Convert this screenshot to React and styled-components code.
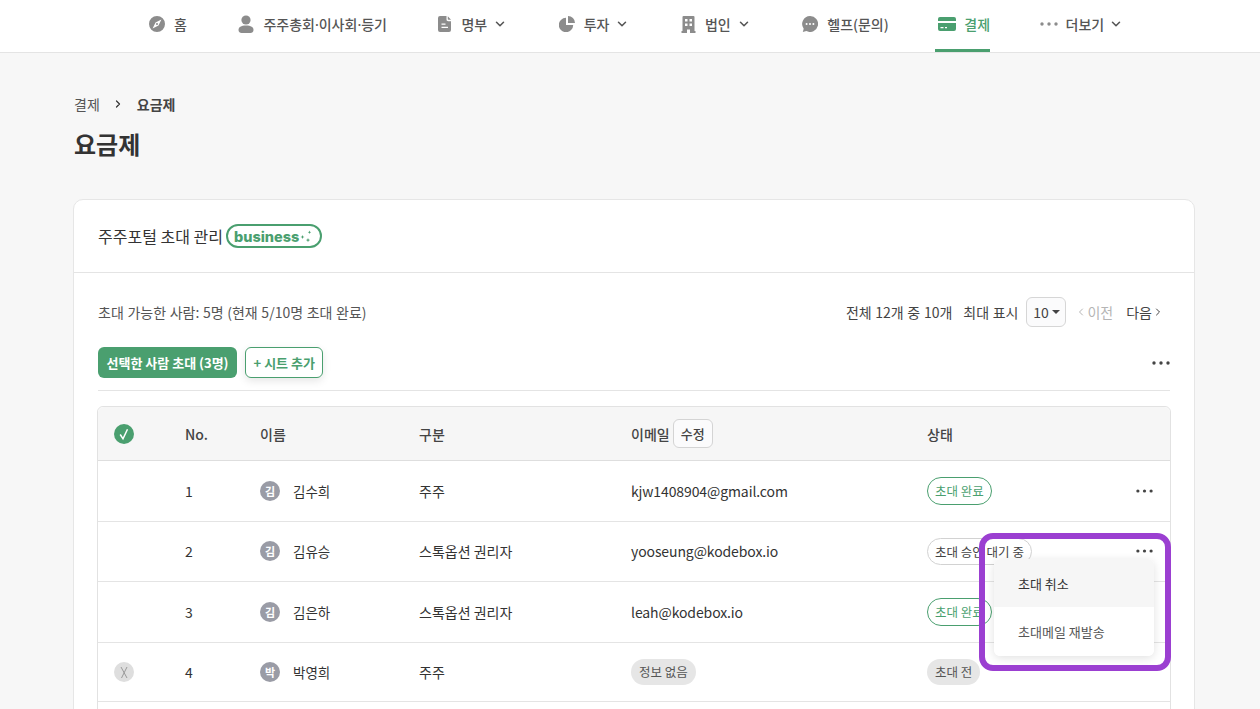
import React from "react";
import styled, { createGlobalStyle } from "styled-components";
import { ChevronDown, ChevronLeft, ChevronRight } from "lucide-react";

const GREEN = "#4a9f6f";

const GlobalStyle = createGlobalStyle`
  html, body {
    margin: 0;
    padding: 0;
    height: 100%;
    overflow: hidden;
    background: #f7f7f7;
  }
  * { box-sizing: border-box; }
  body {
    font-family: "Noto Sans CJK KR", "Noto Sans", sans-serif;
    color: #333;
  }
`;

// the CJK middle dot is too wide here
const MidDot = styled.span`
  font-family: "Noto Sans", sans-serif;
`;

// nav icons
const CompassIcon = () => (
  <svg width="16" height="16" viewBox="0 0 16 16">
    <path
      fillRule="evenodd"
      fill="currentColor"
      d="M8 0a8 8 0 1 1 0 16A8 8 0 0 1 8 0zm4.400 3.600L6.500 6.500 3.600 12.400l5.900-2.900 2.900-5.900zM8 7a1 1 0 1 1 0 2 1 1 0 0 1 0-2z"
    />
  </svg>
);
const PersonIcon = () => (
  <svg width="16" height="18" viewBox="0 0 16 18">
    <circle cx="8" cy="5" r="4.600" fill="currentColor" />
    <path fill="currentColor" d="M0.500 15c0-3 2.500-4.500 7.500-4.500s7.500 1.500 7.500 4.500c0 2-1.500 3-3 3h-9c-1.500 0-3-1-3-3z" />
  </svg>
);
const FileIcon = () => (
  <svg width="14" height="16" viewBox="0 0 14 16">
    <path
      fillRule="evenodd"
      fill="currentColor"
      d="M2 0h6.500v3.500c0 1 .7 1.700 1.700 1.700H13V14a2 2 0 0 1-2 2H2a2 2 0 0 1-2-2V2a2 2 0 0 1 2-2zm1.500 7.500v1.300h4V7.500h-4zm0 3.200V12h6.500v-1.300H3.500z"
    />
    <path fill="currentColor" d="M9.800 0.300L13 3.800h-2.500a.7.7 0 0 1-.7-.7V.3z" />
  </svg>
);
const PieIcon = () => (
  <svg width="16" height="16" viewBox="0 0 16 16">
    <path fill="currentColor" d="M7 1.800V9h7.200A7.200 7.200 0 1 1 7 1.800z" />
    <path fill="currentColor" d="M9 0a7 7 0 0 1 7 7H9V0z" />
  </svg>
);
const BuildingIcon = () => (
  <svg width="15" height="17" viewBox="0 0 14 17">
    <path
      fillRule="evenodd"
      fill="currentColor"
      d="M2 0h10a1 1 0 0 1 1 1v14h1v2H8.500v-3.500h-3V17H0v-2h1V1a1 1 0 0 1 1-1zm1.500 3v2.500h2.500V3H3.500zm4.500 0v2.500h2.500V3H8zM3.500 7.500V10h2.500V7.500H3.500zm4.500 0V10h2.500V7.500H8z"
    />
  </svg>
);
const ChatIcon = () => (
  <svg width="16" height="16" viewBox="0 0 16 16">
    <path
      fillRule="evenodd"
      fill="currentColor"
      d="M8 0a8 8 0 1 1-3.600 15.100L.8 16l.9-3.300A8 8 0 0 1 8 0zM4.600 7a1 1 0 1 0 0 2 1 1 0 0 0 0-2zM8 7a1 1 0 1 0 0 2 1 1 0 0 0 0-2zm3.400 0a1 1 0 1 0 0 2 1 1 0 0 0 0-2z"
    />
  </svg>
);
const CardIcon = () => (
  <svg width="18" height="14" viewBox="0 0 18 14">
    <path
      fillRule="evenodd"
      fill="currentColor"
      d="M2 0h14a2 2 0 0 1 2 2v2H0V2a2 2 0 0 1 2-2zM0 6h18v6a2 2 0 0 1-2 2H2a2 2 0 0 1-2-2V6zm2.500 4v1.300h3V10h-3zm4.500 0v1.300h2V10H7z"
    />
  </svg>
);
const DotsIcon = ({ width = 18 }) => (
  <svg width={width} height="4" viewBox="0 0 18 4">
    <circle cx="2" cy="2" r="1.700" fill="currentColor" />
    <circle cx="9" cy="2" r="1.700" fill="currentColor" />
    <circle cx="16" cy="2" r="1.700" fill="currentColor" />
  </svg>
);
const Sparkles = () => (
  <svg width="13" height="13" viewBox="0 0 13 13">
    <path fill={GREEN} d="M2.500 5l.6 1.400L4.500 7l-1.400.6L2.500 9l-.6-1.400L.5 7l1.400-.6z" />
    <path fill={GREEN} d="M9.500 0.500l.5 1.200 1.200.5-1.200.5-.5 1.200-.5-1.200-1.200-.5 1.200-.5z" />
    <path fill={GREEN} d="M8 8l.6 1.500 1.500.6-1.500.6L8 12.300l-.6-1.600-1.500-.6 1.500-.6z" />
  </svg>
);
const ThinCheck = () => (
  <svg width="20" height="20" viewBox="0 0 20 20">
    <path d="M6.200 10.500L9 14.800 13.500 5.200" fill="none" stroke="#fff" strokeWidth="1.500" />
  </svg>
);
const ThinCross = () => (
  <svg width="20" height="20" viewBox="0 0 20 20">
    <path d="M7 5l6 11M13 5L7.500 16" fill="none" stroke="#999" strokeWidth="1" />
  </svg>
);

const NAV_ITEMS = [
  { id: "home", label: "홈", icon: <CompassIcon /> },
  {
    id: "meeting",
    label: (
      <>
        주주총회<MidDot>·</MidDot>이사회<MidDot>·</MidDot>등기
      </>
    ),
    icon: <PersonIcon />,
  },
  { id: "list", label: "명부", icon: <FileIcon />, more: true },
  { id: "invest", label: "투자", icon: <PieIcon />, more: true },
  { id: "corp", label: "법인", icon: <BuildingIcon />, more: true },
  { id: "help", label: "헬프(문의)", icon: <ChatIcon /> },
  { id: "pay", label: "결제", icon: <CardIcon />, active: true, tight: true },
  { id: "etc", label: "더보기", icon: <DotsIcon />, more: true, tight: true },
];

const ROWS = [
  { no: 1, name: "김수희", initial: "김", type: "주주", email: "kjw1408904@gmail.com", status: "초대 완료", tone: "green" },
  { no: 2, name: "김유승", initial: "김", type: "스톡옵션 권리자", email: "yooseung@kodebox.io", status: "초대 승인 대기 중", tone: "line", open: true },
  { no: 3, name: "김은하", initial: "김", type: "스톡옵션 권리자", email: "leah@kodebox.io", status: "초대 완료", tone: "green" },
  { no: 4, name: "박영희", initial: "박", type: "주주", status: "초대 전", tone: "gray", blocked: true },
];

export default function App() {
  return (
    <Page>
      <GlobalStyle />
      <Header>
        <Nav>
          {NAV_ITEMS.map((item) => (
            <NavItem key={item.id} $active={item.active} $tight={item.tight}>
              <NavIcon $active={item.active}>{item.icon}</NavIcon>
              <span>{item.label}</span>
              {item.more && <NavChevron size={14} strokeWidth={2.6} />}
            </NavItem>
          ))}
        </Nav>
      </Header>

      <Main>
        <Breadcrumb>
          <span>결제</span>
          <ChevronRight size={12} strokeWidth={2.4} />
          <strong>요금제</strong>
        </Breadcrumb>
        <Title>요금제</Title>

        <Card>
          <CardHead>
            주주포털 초대 관리
            <PlanBadge>
              business
              <Sparkles />
            </PlanBadge>
          </CardHead>

          <CardBody>
            <InfoBar>
              <span>초대 가능한 사람: 5명 (현재 5/10명 초대 완료)</span>
              <Paging>
                <span>전체 12개 중 10개</span>
                <span>최대 표시</span>
                <PageSize>
                  10<Caret />
                </PageSize>
                <PageLink $disabled>
                  <ChevronLeft size={12} />
                  이전
                </PageLink>
                <PageLink>
                  다음
                  <ChevronRight size={12} />
                </PageLink>
              </Paging>
            </InfoBar>

            <ActionBar>
              <PrimaryButton>선택한 사람 초대 (3명)</PrimaryButton>
              <OutlineButton>+ 시트 추가</OutlineButton>
              <MoreButton>
                <DotsIcon />
              </MoreButton>
            </ActionBar>

            <Table>
              <HeadRow>
                <CheckCell>
                  <CheckDot>
                    <ThinCheck />
                  </CheckDot>
                </CheckCell>
                <span>No.</span>
                <span>이름</span>
                <span>구분</span>
                <EmailHead>
                  이메일
                  <EditButton>수정</EditButton>
                </EmailHead>
                <span>상태</span>
                <span />
              </HeadRow>

              {ROWS.map((row) => (
                <Row key={row.no}>
                  <CheckCell>
                    {row.blocked && (
                      <BlockedDot>
                        <ThinCross />
                      </BlockedDot>
                    )}
                  </CheckCell>
                  <span>{row.no}</span>
                  <NameCell>
                    <Avatar>{row.initial}</Avatar>
                    {row.name}
                  </NameCell>
                  <span>{row.type}</span>
                  {row.email ? (
                    <Email>{row.email}</Email>
                  ) : (
                    <div>
                      <StatusTag $tone="gray">정보 없음</StatusTag>
                    </div>
                  )}
                  <div>
                    <StatusTag $tone={row.tone}>{row.status}</StatusTag>
                  </div>
                  {row.blocked ? (
                    <span />
                  ) : (
                    <RowMore>
                      <DotsIcon width={17} />
                    </RowMore>
                  )}

                  {row.open && (
                    <>
                      <RowMenu>
                        <MenuItem $hover>초대 취소</MenuItem>
                        <MenuItem>초대메일 재발송</MenuItem>
                      </RowMenu>
                      <Highlight />
                    </>
                  )}
                </Row>
              ))}
            </Table>
          </CardBody>
        </Card>
      </Main>
    </Page>
  );
}

const Page = styled.div`
  height: 709px;
  overflow: hidden;
`;

const Header = styled.header`
  height: 53px;
  background: #fff;
  border-bottom: 1px solid #e4e4e4;
`;

const Nav = styled.nav`
  display: flex;
  height: 100%;
  padding-left: 146px;
  gap: 48.500px;
`;

const NavItem = styled.div`
  display: flex;
  align-items: center;
  gap: ${(p) => (p.$tight ? "8px" : "9px")};
  height: 52px;
  margin-left: ${(p) => (p.$tight ? "-2px" : "0")};
  padding: 0 0 1px 3px;
  font-size: 14px;
  font-weight: 500;
  white-space: nowrap;
  color: ${(p) => (p.$active ? GREEN : "#555")};
  border-bottom: 3px solid ${(p) => (p.$active ? GREEN : "transparent")};
`;

const NavIcon = styled.span`
  display: flex;
  align-items: center;
  color: ${(p) => (p.$active ? GREEN : "#8c8c8c")};
`;

const NavChevron = styled(ChevronDown)`
  margin-left: -3px;
`;

const Main = styled.main`
  padding: 40px 65px 0 73px;
`;

const Breadcrumb = styled.div`
  display: flex;
  align-items: center;
  gap: 12.500px;
  height: 22px;
  padding-left: 1px;
  font-size: 14px;
  color: #555;
  strong {
    font-weight: 700;
    color: #444;
  }
  svg {
    color: #333;
  }
`;

const Title = styled.h1`
  margin: 12px 0 0;
  padding-left: 1px;
  height: 34px;
  line-height: 34px;
  font-size: 24px;
  font-weight: 700;
  color: #333;
`;

const Card = styled.section`
  margin-top: 38px;
  background: #fff;
  border: 1px solid #e6e6e6;
  border-radius: 10px 10px 0 0;
`;

const CardHead = styled.div`
  display: flex;
  align-items: center;
  gap: 3px;
  height: 73px;
  padding: 0 24px;
  font-size: 16px;
  color: #333;
  border-bottom: 1px solid #e4e4e4;
`;

const PlanBadge = styled.span`
  display: inline-flex;
  align-items: center;
  gap: 1px;
  height: 24px;
  padding: 0 7px 0 6px;
  border: 2px solid ${GREEN};
  border-radius: 12px;
  font-family: Inter, sans-serif;
  font-size: 14.500px;
  font-weight: 800;
  color: ${GREEN};
`;

const CardBody = styled.div`
  padding: 24px 24px 40px;
`;

const InfoBar = styled.div`
  display: flex;
  align-items: center;
  justify-content: space-between;
  height: 30px;
  font-size: 14px;
  word-spacing: 0.500px;
  color: #555;
`;

const Paging = styled.div`
  display: flex;
  align-items: center;
  gap: 11px;
  padding-right: 6px;
  color: #444;
`;

const PageSize = styled.div`
  display: flex;
  align-items: center;
  justify-content: center;
  gap: 3px;
  width: 40px;
  height: 30px;
  margin: 0 -2px 0 -3px;
  background: #fbfbfc;
  border: 1px solid #d6d6d6;
  border-radius: 6px;
`;

const Caret = styled.i`
  width: 0;
  height: 0;
  border-left: 4px solid transparent;
  border-right: 4px solid transparent;
  border-top: 4px solid #444;
`;

const PageLink = styled.span`
  display: flex;
  align-items: center;
  margin-right: ${(p) => (p.$disabled ? "2px" : "0")};
  color: ${(p) => (p.$disabled ? "#b5b5b5" : "#444")};
`;

const ActionBar = styled.div`
  display: flex;
  align-items: center;
  gap: 8px;
  margin-top: 20px;
  padding-bottom: 12px;
  border-bottom: 1px solid #e4e4e4;
`;

const PrimaryButton = styled.button`
  height: 31px;
  padding: 0 8.500px;
  background: ${GREEN};
  border: none;
  border-radius: 6px;
  font: 700 13px "Noto Sans CJK KR", sans-serif;
  color: #fff;
`;

const OutlineButton = styled.button`
  height: 31px;
  padding: 0 7.500px;
  background: #fff;
  border: 1px solid ${GREEN};
  border-radius: 6px;
  box-shadow: 0 3px 8px rgba(0, 0, 0, 0.1);
  font: 700 13px "Noto Sans CJK KR", sans-serif;
  color: ${GREEN};
`;

const MoreButton = styled.div`
  display: flex;
  align-items: center;
  justify-content: flex-end;
  margin-left: auto;
  color: #444;
`;

const RowMore = styled(MoreButton)`
  padding-right: 17px;
`;

const Table = styled.div`
  margin: 15px -1px 0;
  background: #fff;
  border: 1px solid #e2e2e2;
  border-radius: 6px 6px 0 0;
  padding-bottom: 40px;
`;

const Row = styled.div`
  position: relative;
  display: grid;
  grid-template-columns: 87px 75px 159px 212px 296px 1fr 48px;
  align-items: center;
  padding: 16px 0;
  font-size: 14px;
  color: #333;
  border-bottom: 1px solid #e4e4e4;
`;

const HeadRow = styled(Row)`
  height: 54px;
  padding: 0;
  background: #f6f6f6;
  border-radius: 6px 6px 0 0;
  border-bottom-color: #dedede;
  font-weight: 500;
  color: #444;
`;

const CheckCell = styled.div`
  display: flex;
  padding-left: 16px;
`;

const CheckDot = styled.span`
  display: flex;
  align-items: center;
  justify-content: center;
  width: 20px;
  height: 20px;
  border-radius: 50%;
  background: ${GREEN};
`;

const BlockedDot = styled(CheckDot)`
  background: #dedede;
`;

const EmailHead = styled.div`
  display: flex;
  align-items: center;
  gap: 3px;
`;

const EditButton = styled.button`
  width: 40px;
  height: 29px;
  padding: 0;
  background: #fbfbfc;
  border: 1px solid #d4d4d4;
  border-radius: 6px;
  font: 500 13px "Noto Sans CJK KR", sans-serif;
  color: #444;
`;

const Email = styled.span`
  letter-spacing: -0.100px;
`;

const NameCell = styled.div`
  display: flex;
  align-items: center;
  gap: 13px;
  font-size: 13.500px;
`;

const Avatar = styled.span`
  display: flex;
  align-items: center;
  justify-content: center;
  width: 20px;
  height: 20px;
  border-radius: 50%;
  background: #9a9ca6;
  font-size: 11px;
  font-weight: 700;
  color: #fff;
`;

const TONES = {
  green: `border: 1px solid ${GREEN}; color: ${GREEN}; height: 27.500px; padding: 0 7px;`,
  line: "border: 1px solid #d2d2d2; color: #444; height: 27.500px; padding: 0 7px;",
  gray: "background: #e6e6e6; color: #555; height: 26px; padding: 0 8px;",
};

const StatusTag = styled.span`
  display: inline-flex;
  align-items: center;
  vertical-align: top;
  border-radius: 14px;
  font-size: 12.500px;
  white-space: nowrap;
  ${(p) => TONES[p.$tone]}
`;

const RowMenu = styled.div`
  position: absolute;
  top: 37px;
  right: 16px;
  z-index: 2;
  width: 160px;
  overflow: hidden;
  background: #fff;
  border-radius: 6px;
  box-shadow: 0 2px 10px rgba(0, 0, 0, 0.12);
`;

const MenuItem = styled.div`
  display: flex;
  align-items: center;
  height: 48.500px;
  padding: 1px 0 0 24px;
  font-size: 13px;
  color: ${(p) => (p.$hover ? "#333" : "#555")};
  background: ${(p) => (p.$hover ? "#f6f6f6" : "#fff")};
`;

const Highlight = styled.div`
  position: absolute;
  top: 11px;
  right: -1px;
  z-index: 3;
  width: 192px;
  height: 138px;
  border: 6px solid #9b3fd1;
  border-radius: 14px;
  pointer-events: none;
`;
